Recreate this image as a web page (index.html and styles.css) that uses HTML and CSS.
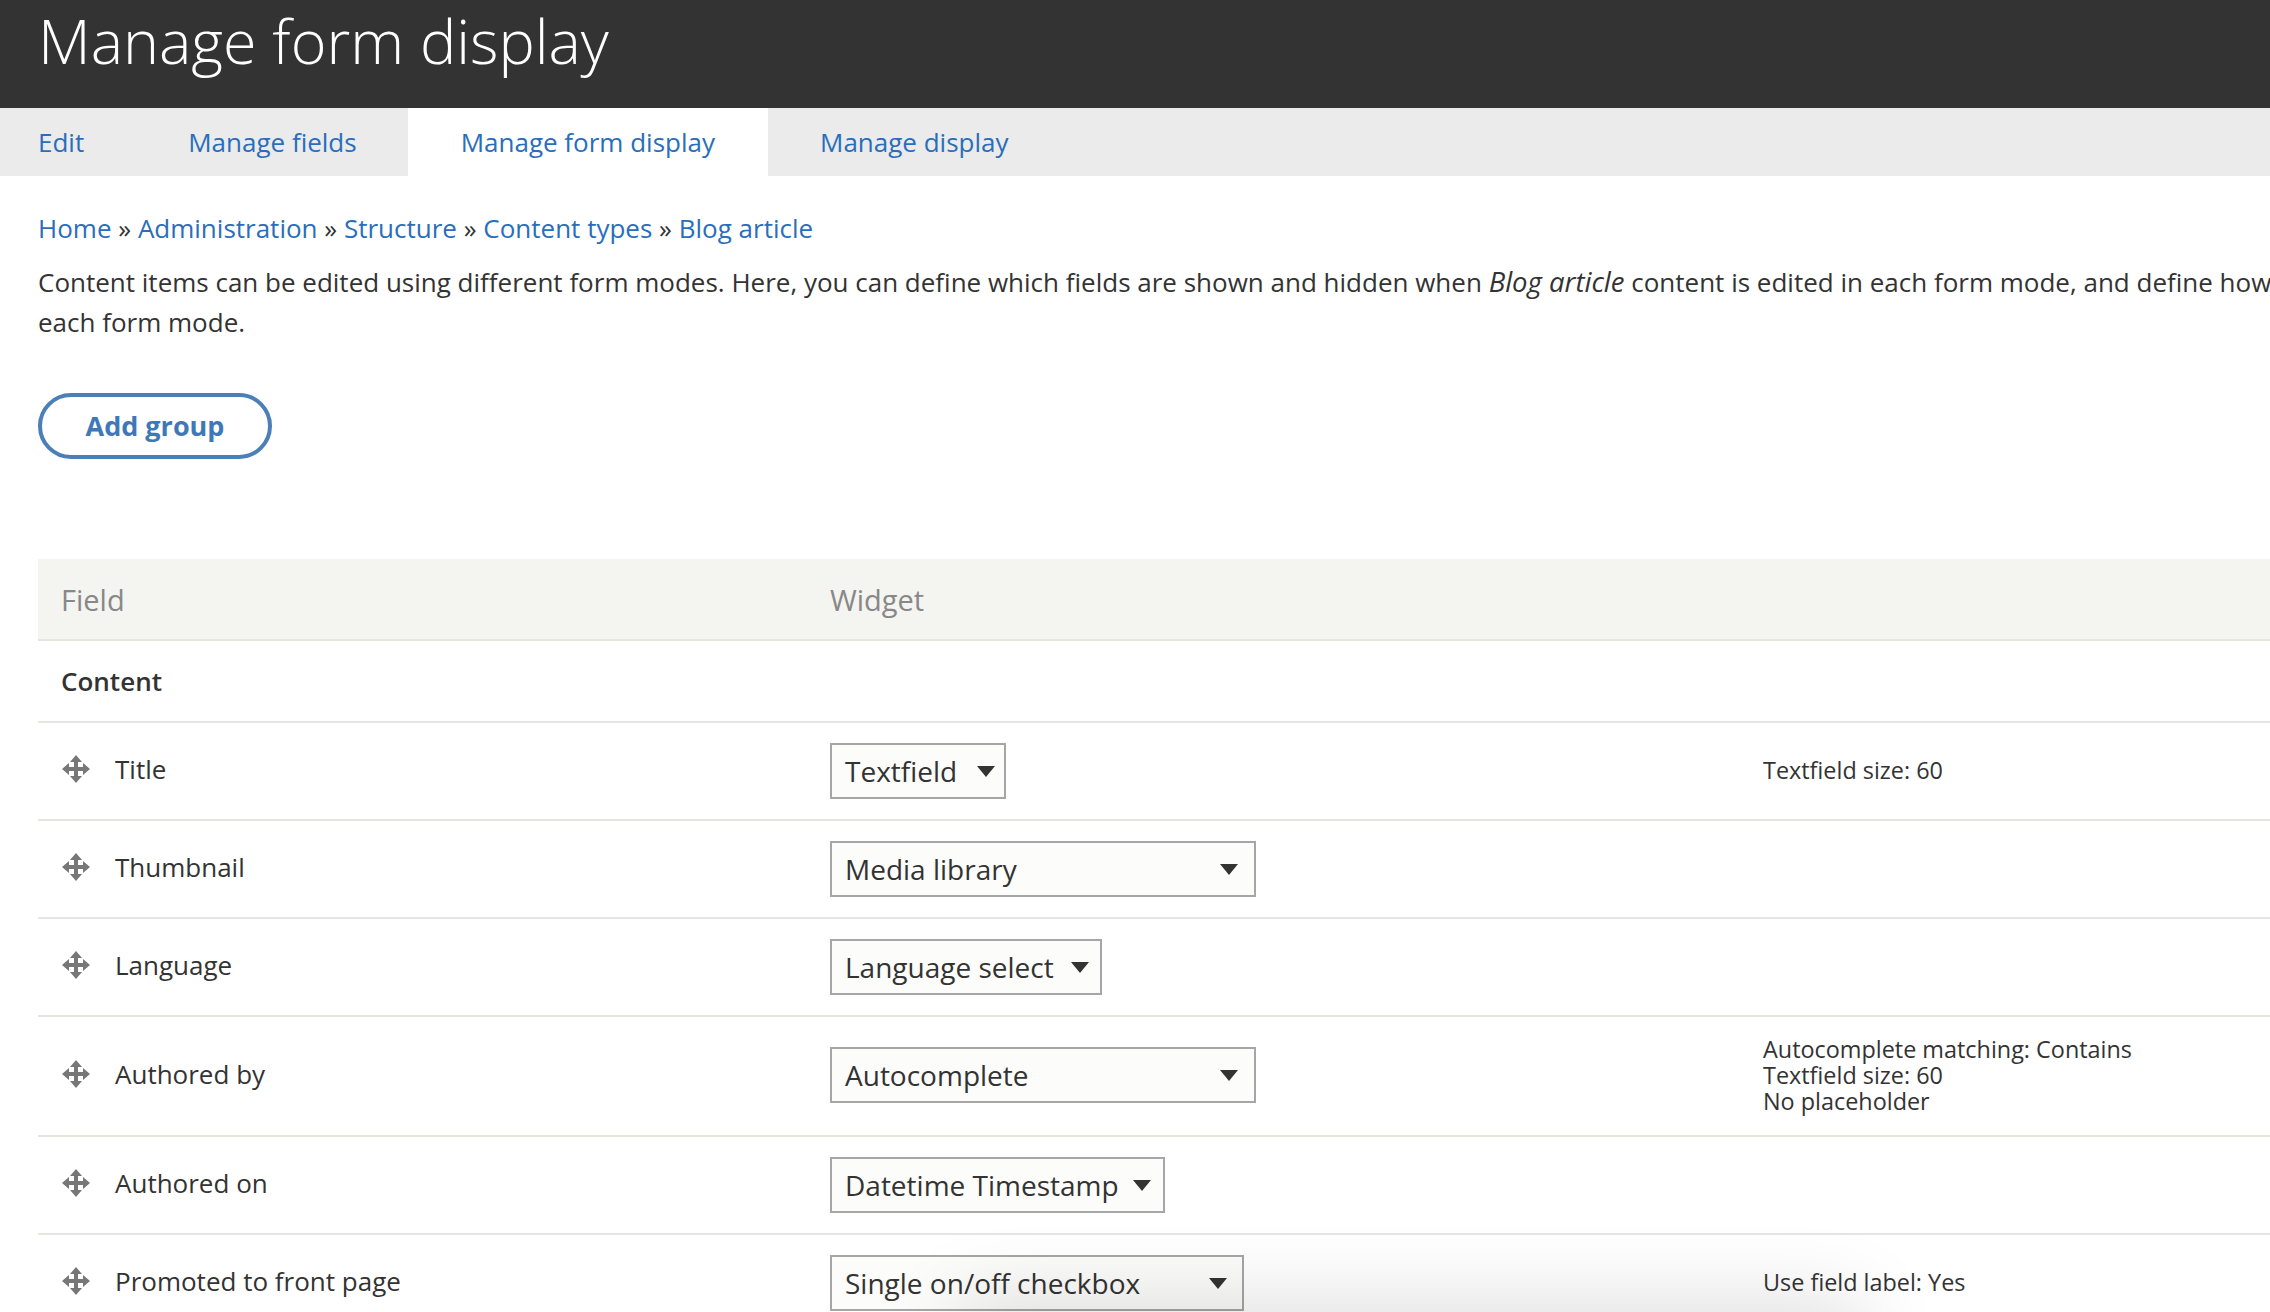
FILE: index.html
```html
<!DOCTYPE html>
<html>
<head>
    <title>Manage form display</title>
    <link rel="stylesheet" href="styles.css">
</head>
<body>

<!-- Page title -->
<div class="page-head">
    <h1>Manage form display</h1>
</div>

<!-- Tabs -->
<ul class="tabs">
    <li><a href="#">Edit</a></li>
    <li><a href="#">Manage fields</a></li>
    <li class="active"><a href="#">Manage form display</a></li>
    <li><a href="#">Manage display</a></li>
</ul>

<div class="content">
    <div class="breadcrumb">
        <a href="#">Home</a> » <a href="#">Administration</a> » <a href="#">Structure</a> » <a href="#">Content types</a> » <a href="#">Blog article</a>
    </div>

    <p class="intro">Content items can be edited using different form modes. Here, you can define which fields are shown and hidden when <em>Blog article</em> content is edited in each form mode, and define how<br>each form mode.</p>

    <a href="#" class="btn-outline">Add group</a>

    <!-- Fields table -->
    <table class="fields">
        <thead>
            <tr>
                <th class="col-field">Field</th>
                <th class="col-widget">Widget</th>
                <th class="col-summary"></th>
            </tr>
        </thead>
        <tbody>
            <tr class="region">
                <td colspan="3">Content</td>
            </tr>
            <tr>
                <td><div class="field-name"><svg class="drag" viewBox="0 0 28 28"><path d="M14 0l6 7h-4v5h5V8l7 6-7 6v-4h-5v5h4l-6 7-6-7h4v-5H7v4l-7-6 7-6v4h5V7H8z"/></svg>Title</div></td>
                <td><div class="select w-textfield">Textfield<span class="caret"></span></div></td>
                <td class="summary">Textfield size: 60</td>
            </tr>
            <tr>
                <td><div class="field-name"><svg class="drag" viewBox="0 0 28 28"><path d="M14 0l6 7h-4v5h5V8l7 6-7 6v-4h-5v5h4l-6 7-6-7h4v-5H7v4l-7-6 7-6v4h5V7H8z"/></svg>Thumbnail</div></td>
                <td><div class="select w-wide">Media library<span class="caret"></span></div></td>
                <td class="summary"></td>
            </tr>
            <tr>
                <td><div class="field-name"><svg class="drag" viewBox="0 0 28 28"><path d="M14 0l6 7h-4v5h5V8l7 6-7 6v-4h-5v5h4l-6 7-6-7h4v-5H7v4l-7-6 7-6v4h5V7H8z"/></svg>Language</div></td>
                <td><div class="select w-language">Language select<span class="caret"></span></div></td>
                <td class="summary"></td>
            </tr>
            <tr>
                <td><div class="field-name"><svg class="drag" viewBox="0 0 28 28"><path d="M14 0l6 7h-4v5h5V8l7 6-7 6v-4h-5v5h4l-6 7-6-7h4v-5H7v4l-7-6 7-6v4h5V7H8z"/></svg>Authored by</div></td>
                <td><div class="select w-wide in-tall-row">Autocomplete<span class="caret"></span></div></td>
                <td class="summary">Autocomplete matching: Contains<br>Textfield size: 60<br>No placeholder</td>
            </tr>
            <tr>
                <td><div class="field-name"><svg class="drag" viewBox="0 0 28 28"><path d="M14 0l6 7h-4v5h5V8l7 6-7 6v-4h-5v5h4l-6 7-6-7h4v-5H7v4l-7-6 7-6v4h5V7H8z"/></svg>Authored on</div></td>
                <td><div class="select w-datetime">Datetime Timestamp<span class="caret"></span></div></td>
                <td class="summary"></td>
            </tr>
            <tr>
                <td><div class="field-name"><svg class="drag" viewBox="0 0 28 28"><path d="M14 0l6 7h-4v5h5V8l7 6-7 6v-4h-5v5h4l-6 7-6-7h4v-5H7v4l-7-6 7-6v4h5V7H8z"/></svg>Promoted to front page</div></td>
                <td><div class="select w-checkbox">Single on/off checkbox<span class="caret"></span></div></td>
                <td class="summary">Use field label: Yes</td>
            </tr>
        </tbody>
    </table>
</div>

<!-- Shadow of a bar sitting just under the window -->
<div class="bottom-glow"></div>

</body>
</html>
```

FILE: styles.css
```css
html, body {
    height: 1312px;
    overflow: hidden;
}
body {
    margin: 0;
    padding: 0;
    position: relative;
    background-color: #fff;
    color: #333;
    font-family: "Open Sans", sans-serif;
    font-size: 26px;
}
a {
    color: #2a6ebb;
    text-decoration: none;
}

/* ---- Header ---- */
.page-head {
    background-color: #333;
    height: 108px;
    padding-left: 38px;
    overflow: hidden;
}
.page-head h1 {
    margin: 0;
    color: #fff;
    font-size: 61px;
    font-weight: 300;
    line-height: 82px;
}

/* ---- Tabs ---- */
.tabs {
    display: flex;
    margin: 0;
    padding: 0;
    list-style: none;
    height: 68px;
    background-color: #ebebeb;
}
.tabs li {
    padding: 0 52px;
    line-height: 68px;
}
.tabs li:first-child {
    padding-left: 38px;
}
.tabs li.active {
    margin-left: -1px;
    padding: 0 53px;
    background-color: #fff;
}

/* ---- Content ---- */
.content {
    padding: 32px 0 0 38px;
}
.breadcrumb {
    line-height: 40px;
    white-space: nowrap;
}
.intro {
    margin: 14px 0 0;
    line-height: 40px;
    white-space: nowrap;
}
.intro em {
    font-size: 27.5px;
}
.btn-outline {
    display: block;
    box-sizing: border-box;
    width: 234px;
    height: 66px;
    margin-top: 51px;
    border: 4px solid #4a7fb8;
    border-radius: 33px;
    color: #3f78b8;
    font-size: 27px;
    font-weight: 700;
    line-height: 58px;
    text-align: center;
}

/* ---- Fields table ---- */
.fields {
    width: 2232px;
    margin-top: 100px;
    border-collapse: collapse;
    table-layout: fixed;
}
.fields th {
    height: 80px;
    padding: 0 0 0 23px;
    background-color: #f4f4f0;
    border-bottom: 2px solid #e6e5e0;
    color: #888;
    font-size: 29px;
    font-weight: 400;
    text-align: left;
}
.fields .col-field {
    width: 769px;
}
.fields .col-widget {
    width: 933px;
    padding-left: 0;
}
.fields td {
    padding: 20px 0;
    border-bottom: 2px solid #e6e5e0;
    vertical-align: middle;
}
.fields td:first-child {
    padding-left: 24px;
}
.fields .region td {
    padding: 20px 0 20px 23px;
    font-weight: 600;
    line-height: 40px;
}
.field-name {
    display: flex;
    align-items: center;
    gap: 25px;
    margin: -2px 0 2px;
}
.drag {
    width: 28px;
    height: 28px;
    fill: #777;
}
.select {
    display: flex;
    align-items: center;
    justify-content: space-between;
    box-sizing: border-box;
    height: 56px;
    padding: 0 10px 0 13px;
    background-color: #fcfcfa;
    border: 2px solid #a6a6a6;
    font-size: 28px;
    white-space: nowrap;
}
.select.in-tall-row {
    margin: -1px 0 1px;
}
.caret {
    width: 0;
    height: 0;
    border-left: 9px solid transparent;
    border-right: 9px solid transparent;
    border-top: 11px solid #333;
}
.w-textfield { width: 176px; padding-right: 9px; }
.w-wide { width: 426px; padding-right: 16px; }
.w-language { width: 272px; padding-right: 11px; }
.w-datetime { width: 335px; padding-right: 12px; }
.w-checkbox { width: 414px; padding-right: 15px; }
.fields td.summary {
    padding: 19px 0 21px;
    font-size: 23.4px;
    line-height: 26px;
}

.bottom-glow {
    position: absolute;
    left: 990px;
    top: 1332px;
    width: 840px;
    height: 60px;
    box-shadow: 0 0 80px 34px rgba(0, 0, 0, 0.12);
}
```
